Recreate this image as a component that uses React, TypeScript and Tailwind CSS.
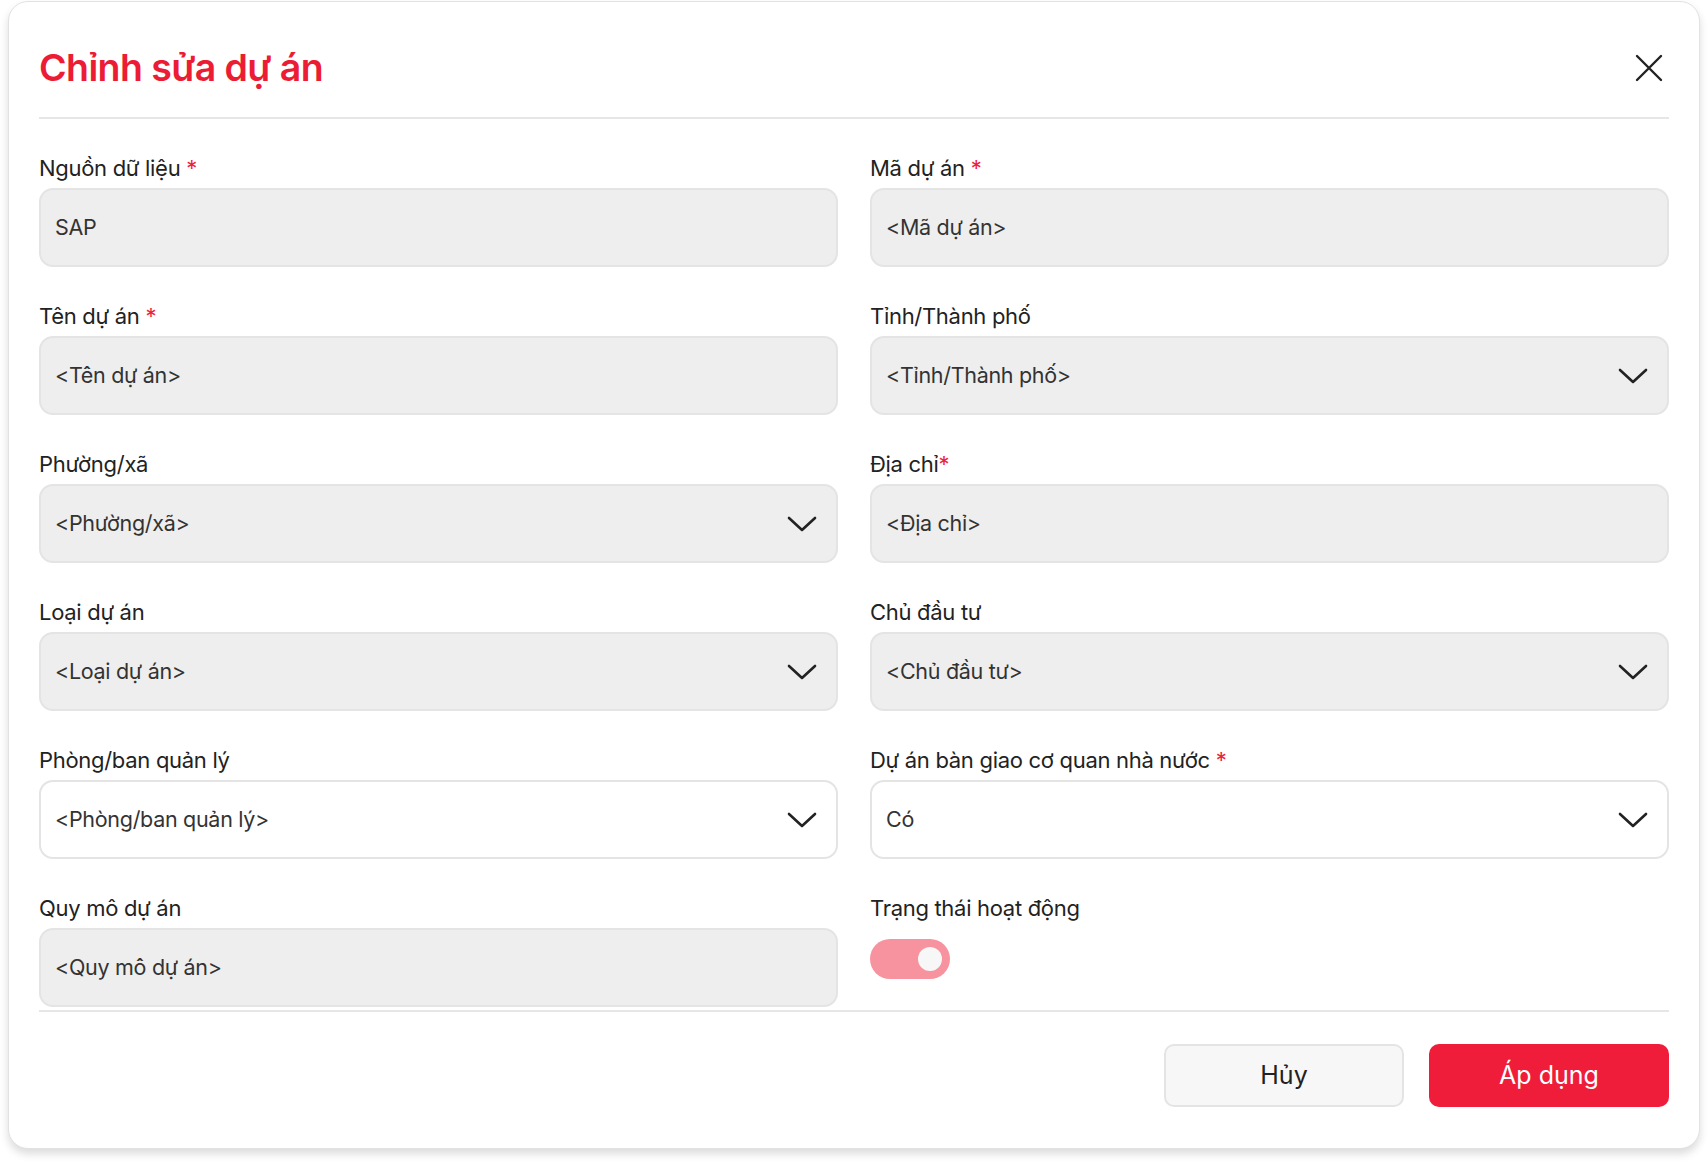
import React from "react";

function Chevron() {
    return (
        <svg width="30" height="16" viewBox="0 0 30 16" fill="none">
            <path d="M2 2 L15 14 L28 2" stroke="#222" strokeWidth="2.6" strokeLinecap="round" strokeLinejoin="round" />
        </svg>
    );
}

function Label(props: { text: string; required?: boolean; tight?: boolean }) {
    return (
        <div className="h-[28px] leading-[28px] text-[22px] text-[#222] tracking-[-0.3px]">
            {props.text}
            {props.required && (
                <span className={`text-[#ef1c3a] ${props.tight ? "" : "ml-[6px]"}`}>*</span>
            )}
        </div>
    );
}

function Field(props: {
    label: string;
    value: string;
    required?: boolean;
    tight?: boolean;
    select?: boolean;
    white?: boolean;
}) {
    return (
        <div className="flex flex-col">
            <Label text={props.label} required={props.required} tight={props.tight} />
            <div
                className={`mt-[6px] h-[79px] rounded-[14px] border-2 border-[#e4e4e4] pl-[14px] pr-[19px] flex items-center justify-between ${props.white ? "bg-white" : "bg-[#eeeeee]"}`}
            >
                <span className="text-[21.5px] text-[#333] tracking-[-0.3px]">{props.value}</span>
                {props.select && <Chevron />}
            </div>
        </div>
    );
}

export default function App() {
    return (
        <div className="min-h-screen bg-white font-['Inter','Noto_Sans',sans-serif] pl-[8px] pr-[8px] pt-[1px]">
            <div className="w-[1692px] rounded-[20px] border border-[#e2e2e2] bg-white shadow-[0_5px_8px_rgba(0,0,0,0.14)] px-[30px] pt-[42px] pb-[41px]">
                {/* header */}
                <div className="flex items-center justify-between h-[48px]">
                    <h1 className="text-[37.5px] font-semibold text-[#ec1c34] tracking-[-0.6px] leading-[48px]">
                        Chỉnh sửa dự án
                    </h1>
                    <button className="mr-[6px]">
                        <svg width="28" height="28" viewBox="0 0 28 28" fill="none">
                            <path d="M2 2 L26 26 M26 2 L2 26" stroke="#222" strokeWidth="2.4" strokeLinecap="round" />
                        </svg>
                    </button>
                </div>
                <div className="mt-[25px] h-[2px] bg-[#e6e6e6]" />

                {/* form */}
                <div className="grid grid-cols-2 gap-x-[32px] gap-y-[35px] pt-[35px]">
                    <Field label="Nguồn dữ liệu" required value="SAP" />
                    <Field label="Mã dự án" required value="<Mã dự án>" />
                    <Field label="Tên dự án" required value="<Tên dự án>" />
                    <Field label="Tỉnh/Thành phố" value="<Tỉnh/Thành phố>" select />
                    <Field label="Phường/xã" value="<Phường/xã>" select />
                    <Field label="Địa chỉ" required tight value="<Địa chỉ>" />
                    <Field label="Loại dự án" value="<Loại dự án>" select />
                    <Field label="Chủ đầu tư" value="<Chủ đầu tư>" select />
                    <Field label="Phòng/ban quản lý" value="<Phòng/ban quản lý>" select white />
                    <Field label="Dự án bàn giao cơ quan nhà nước" required value="Có" select white />
                    <Field label="Quy mô dự án" value="<Quy mô dự án>" />
                    <div className="flex flex-col">
                        <Label text="Trạng thái hoạt động" />
                        <div className="mt-[17px] w-[80px] h-[40px] rounded-full bg-[#f7939f] flex items-center justify-end pr-[8px]">
                            <div className="w-[24px] h-[24px] rounded-full bg-[#f7f7f7]" />
                        </div>
                    </div>
                </div>
                <div className="mt-[3px] h-[2px] bg-[#e6e6e6]" />

                {/* footer */}
                <div className="flex justify-end gap-[25px] pt-[32px]">
                    <button className="w-[240px] h-[63px] rounded-[10px] border-2 border-[#e4e4e4] bg-[#f7f7f7] text-[25px] text-[#222]">
                        Hủy
                    </button>
                    <button className="w-[240px] h-[63px] rounded-[10px] bg-[#ef1c3a] text-[25px] text-white">
                        Áp dụng
                    </button>
                </div>
            </div>
        </div>
    );
}
